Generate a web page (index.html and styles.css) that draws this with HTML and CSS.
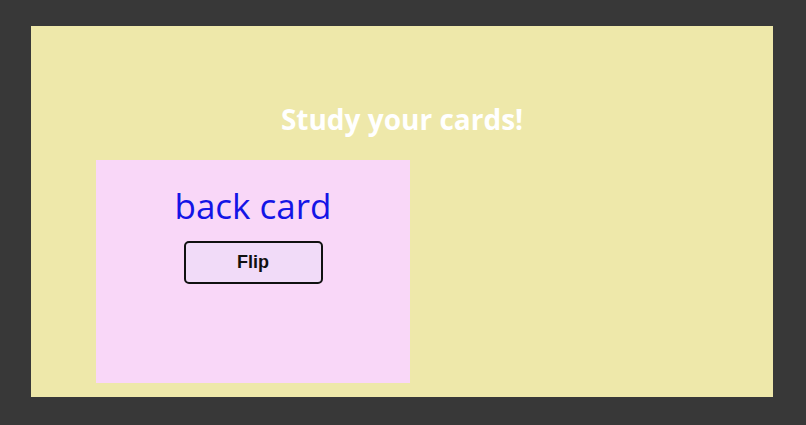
FILE: index.html
```html
<!DOCTYPE html>
<html>
<head>
<meta charset="utf-8">
<link rel="stylesheet" href="styles.css">
</head>
<body>
<main class="panel">
  <h1 class="title">Study your cards!</h1>
  <section class="card">
    <p class="card-text">back card</p>
    <button class="flip">Flip</button>
  </section>
</main>
</body>
</html>
```
FILE: styles.css
```css
html, body {
  margin: 0;
  padding: 0;
  background: #383838;
}
body {
  padding: 26px 0 0 31px;
  height: 425px;
  box-sizing: border-box;
  overflow: hidden;
}
.panel {
  width: 742px;
  height: 371px;
  background: #eee8aa;
  box-sizing: border-box;
  padding: 73px 0 0 65px;
  display: flex;
  flex-direction: column;
}
.title {
  margin: 0 0 21px -65px;
  width: 742px;
  text-align: center;
  color: #ffffff;
  font-family: "Open Sans", sans-serif;
  font-weight: 700;
  font-size: 28px;
  line-height: 40px;
  height: 40px;
}
.card {
  width: 314px;
  height: 223px;
  background: #f9d7f8;
  display: flex;
  flex-direction: column;
  align-items: center;
  padding-top: 22px;
  box-sizing: border-box;
}
.card-text {
  margin: 0;
  color: #1414e6;
  font-family: "Open Sans", sans-serif;
  font-size: 35px;
  line-height: 48px;
}
.flip {
  margin-top: 11px;
  width: 139px;
  height: 43px;
  border: 2px solid #111;
  border-radius: 5px;
  background: #f1dbf8;
  font-family: "Liberation Sans", Arial, sans-serif;
  font-weight: 700;
  font-size: 18px;
  color: #111;
  padding: 0;
}
```
